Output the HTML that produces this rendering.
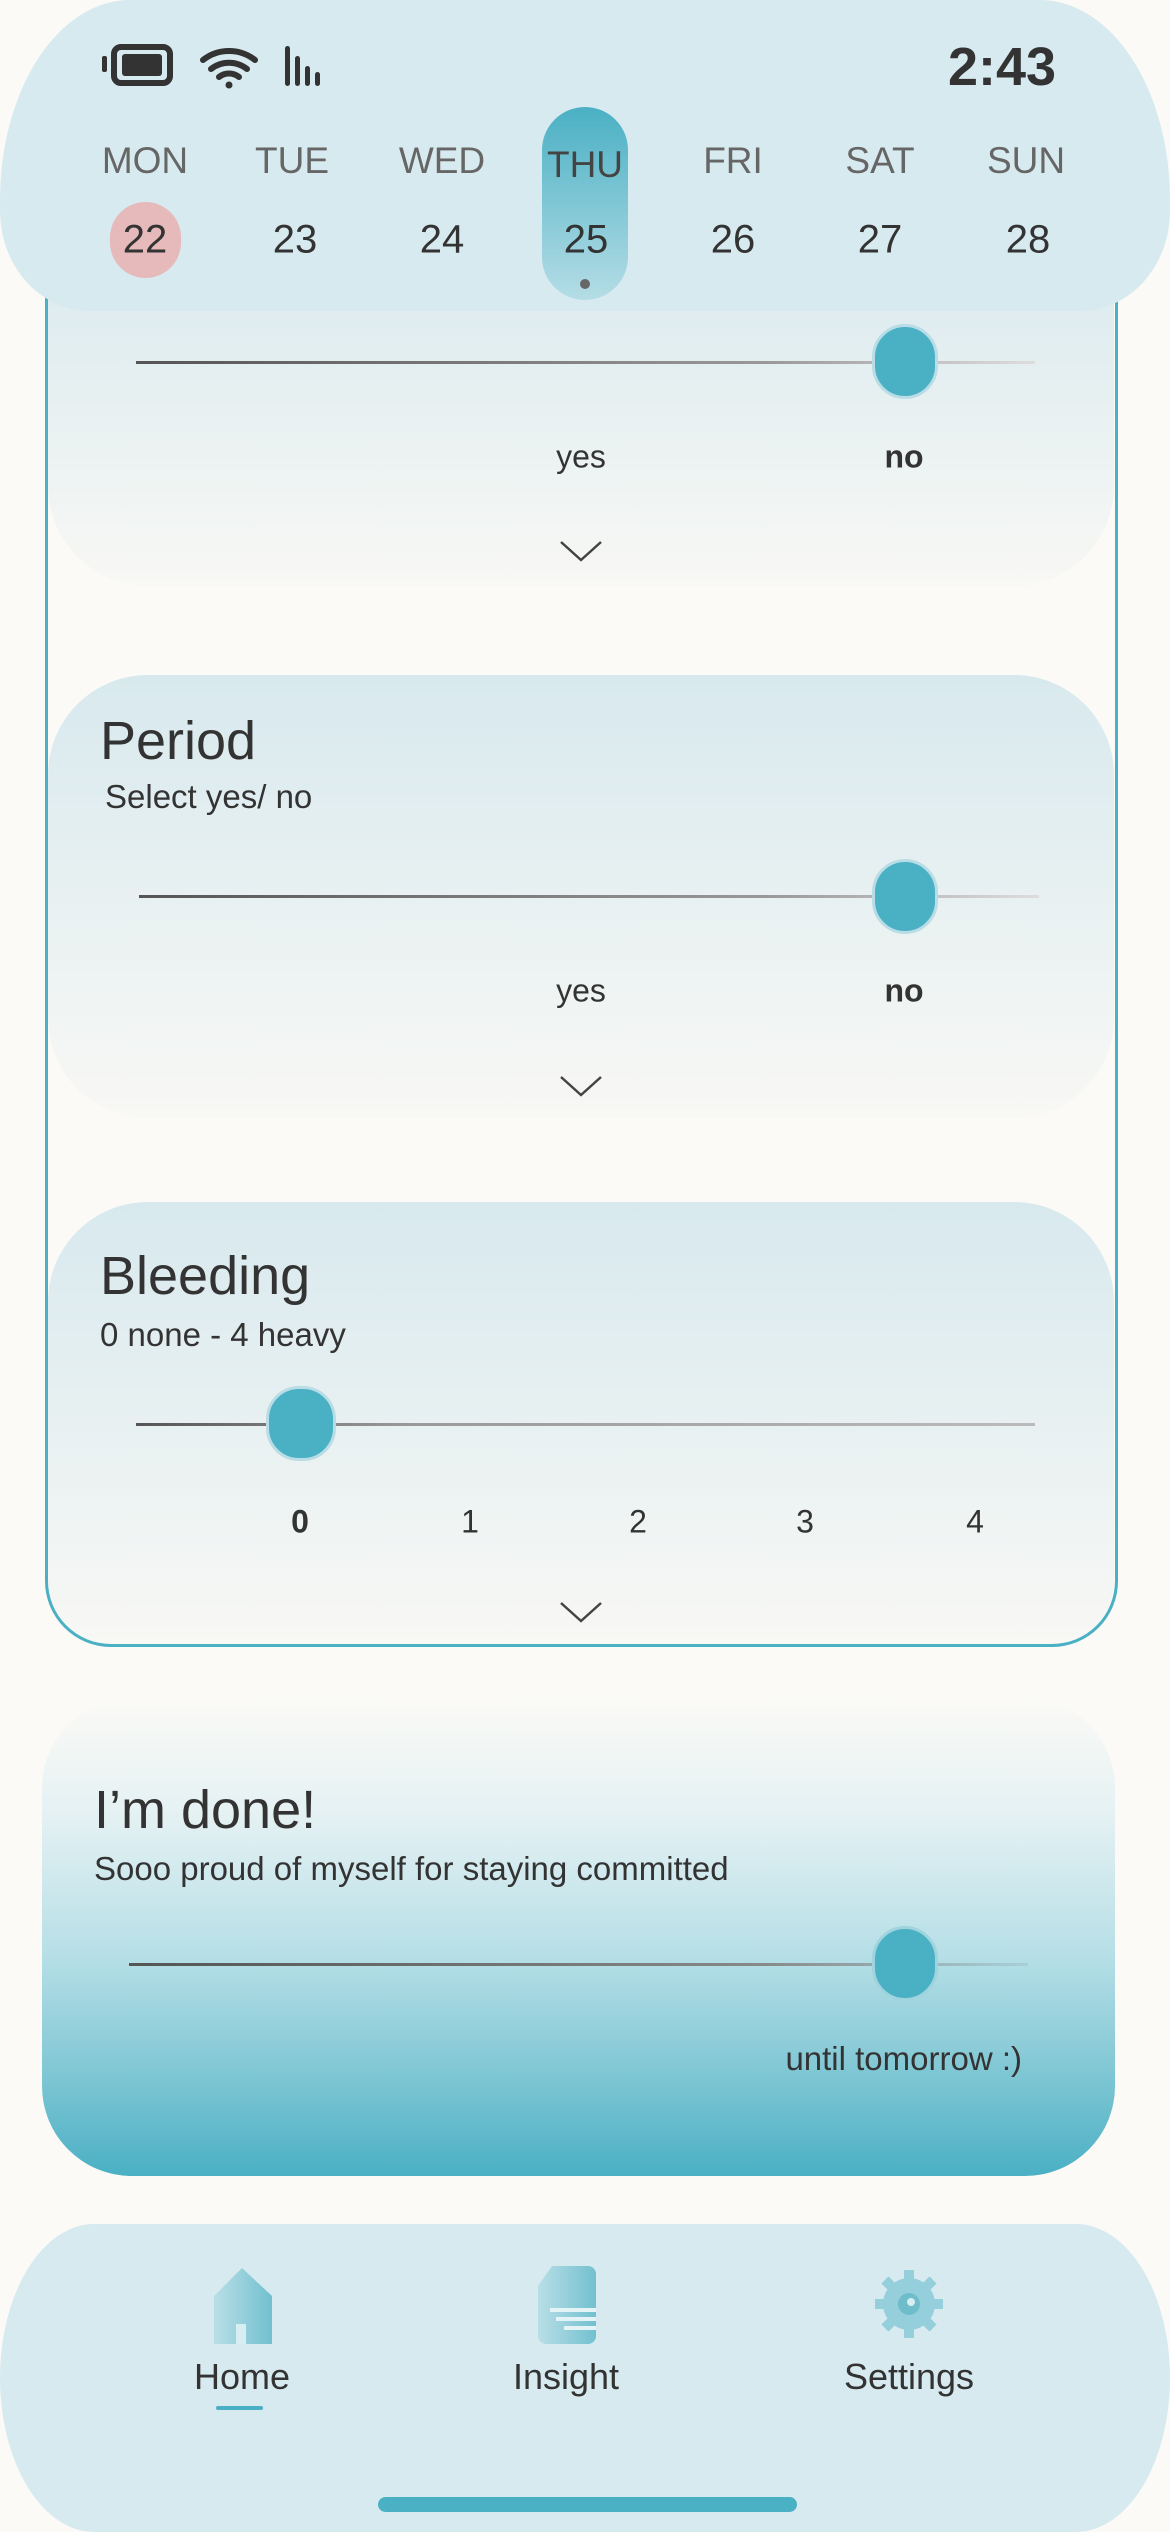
<!DOCTYPE html>
<html><head><meta charset="utf-8"><style>
*{margin:0;padding:0;box-sizing:border-box}
body{width:1170px;height:2532px;background:#fbfaf6;position:relative;overflow:hidden;font-family:"Liberation Sans",sans-serif;color:#333}
.abs{position:absolute}
.outer{left:45px;top:200px;width:1073px;height:1447px;border:3px solid #4ab0c4;border-top:none;border-radius:0 0 66px 66px;z-index:2}
.card{position:absolute;left:48px;width:1066px;border-radius:100px;background:linear-gradient(#d8e9ee,#f8f8f5)}
.line{position:absolute;height:3px;background:linear-gradient(90deg,#555,#999 70%,#ddd)}
.knob{position:absolute;width:66px;height:75px;border-radius:33px;background:#4ab0c4;border:3px solid #b9dde6}
.lbl{position:absolute;font-size:32px;transform:translate(-50%,-50%)}
.chev{position:absolute;width:44px;height:22px}
.title{position:absolute;font-size:54px;color:#333}
.sub{position:absolute;font-size:33px;color:#333}
.day{position:absolute;transform:translate(-50%,-50%);font-size:37px;color:#666}
.num{position:absolute;transform:translate(-50%,-50%);font-size:40px;color:#333}
.nav{position:absolute;transform:translate(-50%,-50%);font-size:36px;color:#333}
</style></head><body>

<div class="abs outer"></div>
<div class="card" style="top:0;height:586px;background:linear-gradient(#d8e9ee 40%,#f8f8f5)"></div>
<div class="line" style="left:136px;top:361px;width:899px"></div>
<div class="knob" style="left:872px;top:324px"></div>
<div class="lbl" style="left:581px;top:457px">yes</div>
<div class="lbl" style="left:904px;top:457px;font-weight:bold">no</div>
<svg class="chev" style="left:559px;top:540px" viewBox="0 0 44 22"><path d="M2 2 L22 20 L42 2" fill="none" stroke="#444" stroke-width="2.5"/></svg>

<div class="card" style="top:675px;height:443px"></div>
<div class="title" style="left:100px;top:710px">Period</div>
<div class="sub" style="left:105px;top:778px">Select yes/ no</div>
<div class="line" style="left:139px;top:895px;width:900px"></div>
<div class="knob" style="left:872px;top:859px"></div>
<div class="lbl" style="left:581px;top:991px">yes</div>
<div class="lbl" style="left:904px;top:991px;font-weight:bold">no</div>
<svg class="chev" style="left:559px;top:1075px" viewBox="0 0 44 22"><path d="M2 2 L22 20 L42 2" fill="none" stroke="#444" stroke-width="2.5"/></svg>

<div class="card" style="top:1202px;height:444px;border-radius:100px 100px 66px 66px"></div>
<div class="title" style="left:100px;top:1245px">Bleeding</div>
<div class="sub" style="left:100px;top:1316px">0 none - 4 heavy</div>
<div class="line" style="left:136px;top:1423px;width:899px;background:linear-gradient(90deg,#555,#999 30%,#bbb)"></div>
<div class="knob" style="left:266px;top:1386px;width:70px"></div>
<div class="lbl" style="left:300px;top:1522px;font-weight:bold">0</div>
<div class="lbl" style="left:470px;top:1522px">1</div>
<div class="lbl" style="left:638px;top:1522px">2</div>
<div class="lbl" style="left:805px;top:1522px">3</div>
<div class="lbl" style="left:975px;top:1522px">4</div>
<svg class="chev" style="left:559px;top:1601px" viewBox="0 0 44 22"><path d="M2 2 L22 20 L42 2" fill="none" stroke="#444" stroke-width="2.5"/></svg>

<div class="card" style="left:42px;top:1698px;width:1073px;height:478px;border-radius:90px;background:linear-gradient(#fbfaf6,#e4f1f3 25%,#b4dee6 55%,#7cc5d3 80%,#4ab0c4)"></div>
<div class="title" style="left:94px;top:1779px">I’m done!</div>
<div class="sub" style="left:94px;top:1850px">Sooo proud of myself for staying committed</div>
<div class="line" style="left:129px;top:1963px;width:899px;background:linear-gradient(90deg,#555,#888 70%,#a9cfd8)"></div>
<div class="knob" style="left:872px;top:1926px;border-color:#9fd3de"></div>
<div class="abs" style="right:148px;top:2040px;font-size:33px">until tomorrow :)</div>

<div class="abs" style="left:0;top:0;width:1170px;height:311px;background:#d7eaef;border-radius:130px 130px 90px 90px/200px 200px 100px 100px;z-index:3"></div>
<div style="position:absolute;left:0;top:0;width:1170px;height:311px;z-index:4">
<svg class="abs" style="left:100px;top:40px" width="240" height="50" viewBox="0 0 240 50">
<rect x="2" y="16" width="5" height="16" rx="2" fill="#333"/>
<rect x="14" y="7" width="56" height="36" rx="7" fill="none" stroke="#333" stroke-width="6"/>
<rect x="22" y="14" width="40" height="22" rx="3" fill="#333"/>
<path d="M155 20a42 42 0 0 0 -52 0M147 29a29 29 0 0 0 -36 0M139 37a16 16 0 0 0 -20 0" fill="none" stroke="#333" stroke-width="6" stroke-linecap="round"/>
<circle cx="129" cy="45" r="3.5" fill="#333"/>
<rect x="185" y="6" width="5" height="40" rx="2.5" fill="#333"/><rect x="195" y="16" width="5" height="30" rx="2.5" fill="#333"/><rect x="205" y="26" width="5" height="20" rx="2.5" fill="#333"/><rect x="215" y="32" width="5" height="14" rx="2.5" fill="#333"/>
</svg>
<div class="abs" style="left:948px;top:36px;font-size:54px;font-weight:bold;color:#333">2:43</div>
<div class="abs" style="left:542px;top:107px;width:86px;height:193px;border-radius:43px;background:linear-gradient(#4ab0c4,#b5dde6)"></div>
<div class="abs" style="left:110px;top:202px;width:71px;height:76px;border-radius:36px;background:#e6b9ba"></div>
<div class="abs" style="left:580px;top:279px;width:10px;height:10px;border-radius:5px;background:#666"></div>
<div class="day" style="left:145px;top:161px">MON</div>
<div class="day" style="left:292px;top:161px">TUE</div>
<div class="day" style="left:442px;top:161px">WED</div>
<div class="day" style="left:585px;top:165px;color:#444">THU</div>
<div class="day" style="left:733px;top:161px">FRI</div>
<div class="day" style="left:880px;top:161px">SAT</div>
<div class="day" style="left:1026px;top:161px">SUN</div>
<div class="num" style="left:145px;top:240px">22</div>
<div class="num" style="left:295px;top:240px">23</div>
<div class="num" style="left:442px;top:240px">24</div>
<div class="num" style="left:586px;top:240px">25</div>
<div class="num" style="left:733px;top:240px">26</div>
<div class="num" style="left:880px;top:240px">27</div>
<div class="num" style="left:1028px;top:240px">28</div>
</div>

<div class="abs" style="left:0;top:2224px;width:1170px;height:308px;background:#d7eaef;border-radius:110px/180px"></div>
<svg class="abs" style="left:204px;top:2266px" width="76" height="80" viewBox="0 0 76 80">
<defs><linearGradient id="g" x1="0" x2="1"><stop offset="0" stop-color="#b9dfe7"/><stop offset="1" stop-color="#72c0cf"/></linearGradient></defs>
<path d="M38 2 L68 30 L68 78 L10 78 L10 30 Z" fill="url(#g)"/><rect x="32" y="58" width="10" height="20" fill="#d7eef2"/>
</svg>
<svg class="abs" style="left:538px;top:2266px" width="58" height="78" viewBox="0 0 58 78">
<path d="M14 0 H50 a8 8 0 0 1 8 8 V70 a8 8 0 0 1 -8 8 H8 a8 8 0 0 1 -8 -8 V20 Z" fill="url(#g)"/>
<rect x="12" y="42" width="46" height="4" fill="#e4f3f6"/><rect x="18" y="51" width="40" height="4" fill="#e4f3f6"/><rect x="26" y="60" width="32" height="4" fill="#e4f3f6"/>
</svg>
<svg class="abs" style="left:873px;top:2268px" width="72" height="72" viewBox="0 0 72 72">
<g fill="#95cfdb"><circle cx="36" cy="36" r="26"/>
<rect x="31" y="2" width="10" height="68"/><rect x="2" y="31" width="68" height="10"/>
<rect x="31" y="2" width="10" height="68" transform="rotate(45 36 36)"/><rect x="31" y="2" width="10" height="68" transform="rotate(-45 36 36)"/></g>
<circle cx="36" cy="36" r="11" fill="#6fbccb"/><circle cx="38" cy="34" r="4" fill="#d7eef2"/>
</svg>
<div class="nav" style="left:242px;top:2377px">Home</div>
<div class="nav" style="left:566px;top:2377px">Insight</div>
<div class="nav" style="left:909px;top:2377px">Settings</div>
<div class="abs" style="left:216px;top:2406px;width:47px;height:4px;border-radius:2px;background:#4ab0c4"></div>
<div class="abs" style="left:378px;top:2497px;width:419px;height:15px;border-radius:8px;background:#4ab0c4"></div>
</body></html>
